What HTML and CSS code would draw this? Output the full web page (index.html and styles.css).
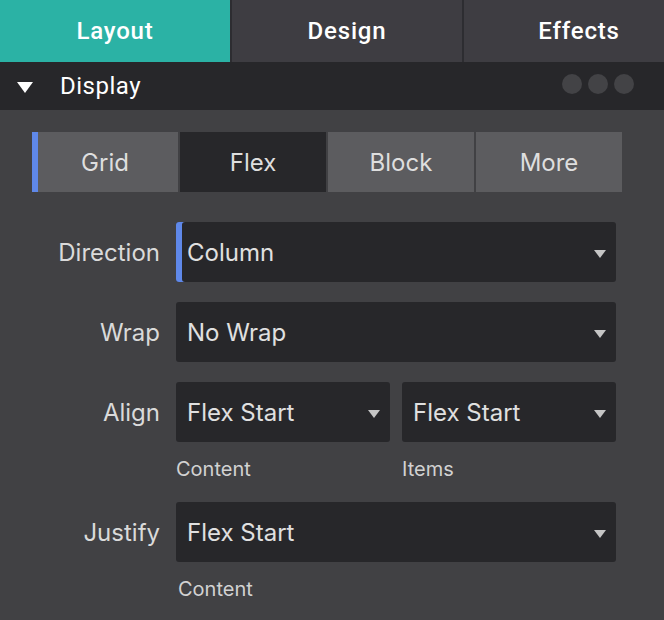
FILE: index.html
```html
<!DOCTYPE html>
<html>
<head>
<meta charset="utf-8">
<title>Display panel</title>
<link rel="stylesheet" href="styles.css">
</head>
<body>
<div class="panel">
  <div class="tabs">
    <div class="tab active">Layout</div>
    <div class="tab">Design</div>
    <div class="tab">Effects</div>
  </div>

  <div class="section-head">
    <span class="caret"></span>
    <span class="section-title">Display</span>
    <span class="dots"><i></i><i></i><i></i></span>
  </div>

  <div class="section-body">
    <div class="seg">
      <div class="seg-btn marked">Grid</div>
      <div class="seg-btn on">Flex</div>
      <div class="seg-btn">Block</div>
      <div class="seg-btn">More</div>
    </div>

    <div class="field">
      <div class="field-label">Direction</div>
      <div class="field-ctrl">
        <div class="select marked"><span>Column</span><span class="arrow"></span></div>
      </div>
    </div>

    <div class="field">
      <div class="field-label">Wrap</div>
      <div class="field-ctrl">
        <div class="select"><span>No Wrap</span><span class="arrow"></span></div>
      </div>
    </div>

    <div class="field">
      <div class="field-label">Align</div>
      <div class="field-ctrl pair">
        <div class="pair-col">
          <div class="select"><span>Flex Start</span><span class="arrow"></span></div>
          <div class="hint">Content</div>
        </div>
        <div class="pair-col">
          <div class="select"><span>Flex Start</span><span class="arrow"></span></div>
          <div class="hint">Items</div>
        </div>
      </div>
    </div>

    <div class="field">
      <div class="field-label">Justify</div>
      <div class="field-ctrl">
        <div class="select"><span>Flex Start</span><span class="arrow"></span></div>
        <div class="hint shift">Content</div>
      </div>
    </div>
  </div>
</div>
</body>
</html>
```

FILE: styles.css
```css
/* Display properties panel */

body
{ margin: 0;
background-color: #414144;
}

div.panel
{ width: 664px;
height: 620px;
overflow: hidden;
background-color: #414144;
font-family: "Inter", "Noto Sans", sans-serif;
}

/* Top tabs */

div.tabs
{ display: flex;
height: 62px;
overflow: hidden;
background-color: #3e3d42;
}

div.tab
{ flex: 0 0 230px;
display: flex;
align-items: center;
justify-content: center;
font-family: "Roboto", "Liberation Sans", sans-serif;
font-size: 24px;
font-weight: 500;
letter-spacing: 0.8px;
color: #ffffff;
}

div.tab + div.tab
{ border-left: 2px solid #2d2d31;
}

div.tab.active
{ background-color: #2bb2a5;
}

/* Section header */

div.section-head
{ display: flex;
align-items: center;
height: 48px;
padding: 0 30px 0 17px;
background-color: #27272a;
}

span.caret
{ width: 0;
height: 0;
border-left: 8.5px solid transparent;
border-right: 8.5px solid transparent;
border-top: 11px solid #ffffff;
margin-top: 2px;
}

span.section-title
{ margin-left: 27px;
font-family: "Roboto", "Liberation Sans", sans-serif;
font-size: 24px;
letter-spacing: 0.5px;
color: #ffffff;
flex: 1;
}

span.dots
{ display: flex;
gap: 6px;
margin-bottom: 4px;
}

span.dots i
{ width: 20px;
height: 20px;
border-radius: 50%;
background-color: #434346;
}

/* Body */

div.section-body
{ padding: 22px 32px 20px;
}

div.seg
{ display: flex;
gap: 2px;
margin-bottom: 30px;
}

div.seg-btn
{ width: 146px;
height: 60px;
display: flex;
align-items: center;
justify-content: center;
background-color: #5c5c5f;
color: #dedede;
font-size: 24px;
}

div.seg-btn.on
{ background-color: #27272a;
}

div.seg-btn.marked,
div.select.marked
{ box-shadow: inset 6px 0 0 #5f88e9;
}

div.field
{ display: flex;
margin-bottom: 20px;
}

div.field-label
{ width: 128px;
height: 60px;
margin-right: 16px;
display: flex;
align-items: center;
justify-content: flex-end;
color: #dadada;
font-size: 24px;
}

div.field-ctrl
{ width: 440px;
}

div.field-ctrl.pair
{ display: flex;
gap: 12px;
}

div.pair-col
{ width: 214px;
}

div.select
{ height: 60px;
display: flex;
align-items: center;
justify-content: space-between;
padding: 0 10px 0 11px;
border-radius: 3px;
background-color: #27272a;
color: #e0e0e0;
font-size: 24px;
}

span.arrow
{ width: 0;
height: 0;
border-left: 6px solid transparent;
border-right: 6px solid transparent;
border-top: 8px solid #c6c6c6;
margin-top: 3px;
}

div.hint
{ height: 25px;
padding-top: 15px;
line-height: 24px;
font-size: 20px;
color: #d2d2d2;
}

div.hint.shift
{ padding-left: 2px;
}
```
